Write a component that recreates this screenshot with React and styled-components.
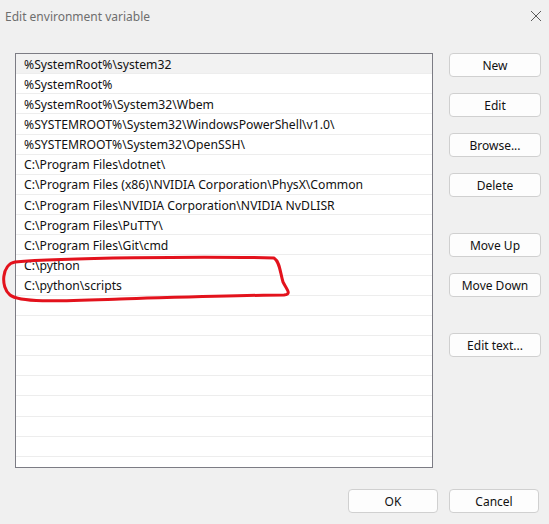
import React from "react";
import styled, { createGlobalStyle } from "styled-components";

const GlobalStyle = createGlobalStyle`
	html, body {
		margin: 0;
		padding: 0;
		background: #f0f0f0;
	}
	* {
		box-sizing: border-box;
	}
`;

const entries = [
	"%SystemRoot%\\system32",
	"%SystemRoot%",
	"%SystemRoot%\\System32\\Wbem",
	"%SYSTEMROOT%\\System32\\WindowsPowerShell\\v1.0\\",
	"%SYSTEMROOT%\\System32\\OpenSSH\\",
	"C:\\Program Files\\dotnet\\",
	"C:\\Program Files (x86)\\NVIDIA Corporation\\PhysX\\Common",
	"C:\\Program Files\\NVIDIA Corporation\\NVIDIA NvDLISR",
	"C:\\Program Files\\PuTTY\\",
	"C:\\Program Files\\Git\\cmd",
	"C:\\python",
	"C:\\python\\scripts",
];

const TOTAL_ROWS = 21;

const Window = styled.div`
	position: relative;
	width: 549px;
	height: 524px;
	background: #f0f0f0;
	display: flex;
	flex-direction: column;
	font-family: "Noto Sans", "Open Sans", sans-serif;
	overflow: hidden;
`;

const TitleBar = styled.div`
	height: 32px;
	display: flex;
	align-items: center;
	justify-content: space-between;
	padding: 0 7px 0 5px;
`;

const Title = styled.span`
	font-size: 12px;
	color: #6e6e6e;
`;

const Body = styled.div`
	display: flex;
	gap: 16px;
	padding: 21px 8px 0 15px;
`;

const ListBox = styled.div`
	width: 418px;
	height: 415px;
	border: 1px solid #7c7c84;
	background: #ffffff;
	overflow: hidden;
`;

const Row = styled.div`
	height: 20.15px;
	border-bottom: 1px solid #ededed;
	display: flex;
	align-items: center;
	padding: 1px 0 0 8px;
	font-size: 12.2px;
	color: #111;
	white-space: nowrap;
	background: ${(p) => (p.$selected ? "#f2f2f2" : "#ffffff")};
`;

const ButtonColumn = styled.div`
	display: flex;
	flex-direction: column;
	gap: 16px;
	width: 92px;
`;

const Button = styled.button`
	width: ${(p) => p.$width || 92}px;
	height: 24px;
	margin-top: ${(p) => p.$space || 0}px;
	background: #fdfdfd;
	border: 1px solid #d0d0d0;
	border-radius: 4px;
	font-family: "Noto Sans", "Open Sans", sans-serif;
	font-size: 12px;
	color: #111;
	padding: 0;
`;

const Footer = styled.div`
	display: flex;
	justify-content: flex-end;
	gap: 11px;
	padding: 21px 10px 0 0;
`;

const Annotation = styled.svg`
	position: absolute;
	left: 0;
	top: 0;
	pointer-events: none;
`;

const CloseIcon = () => (
	<svg width="12" height="12" viewBox="0 0 12 12">
		<path d="M1 1 L11 11 M11 1 L1 11" stroke="#5a5a5a" strokeWidth="1" />
	</svg>
);

const App = () => {
	const rows = [];
	for (let i = 0; i < TOTAL_ROWS; i++) {
		rows.push(
			<Row key={i} $selected={i === 0}>
				{entries[i] || ""}
			</Row>
		);
	}

	return (
		<>
			<GlobalStyle />
			<Window>
				<TitleBar>
					<Title>Edit environment variable</Title>
					<CloseIcon />
				</TitleBar>
				<Body>
					<ListBox>{rows}</ListBox>
					<ButtonColumn>
						<Button>New</Button>
						<Button>Edit</Button>
						<Button>Browse...</Button>
						<Button>Delete</Button>
						<Button $space={20}>Move Up</Button>
						<Button>Move Down</Button>
						<Button $space={20}>Edit text...</Button>
					</ButtonColumn>
				</Body>
				<Footer>
					<Button $width={90}>OK</Button>
					<Button $width={90}>Cancel</Button>
				</Footer>
				<Annotation width="549" height="524" viewBox="0 0 549 524">
					<path
						d="M274 258 C200 256, 60 258, 15 262 C2 264, 0 287, 10 295 C20 303, 60 301, 120 299 C190 297, 250 295, 284 295 C292 294, 287 290, 283 282 C280 272, 280 262, 274 258"
						fill="none"
						stroke="#e3121c"
						strokeWidth="3"
						strokeLinecap="round"
						strokeLinejoin="round"
					/>
				</Annotation>
			</Window>
		</>
	);
};

export default App;
